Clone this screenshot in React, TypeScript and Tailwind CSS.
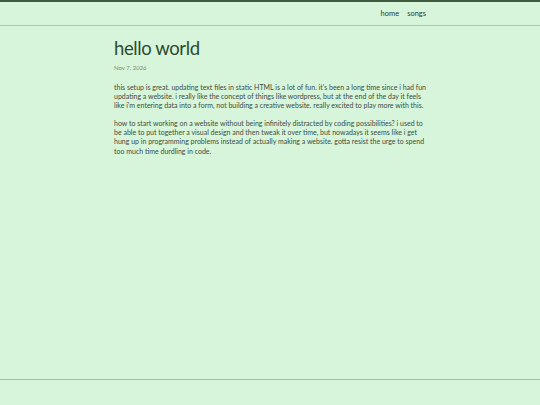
export default function App() {
  return (
    <div
      className="flex min-h-[405px] flex-col bg-[#d7f5db] text-[#3a4a3a]"
      style={{ fontFamily: "Lato, 'Liberation Sans', sans-serif" }}
    >
      <header className="border-t-2 border-b border-t-[#3d5a3e] border-b-[#a9c6aa]">
        <nav className="mx-auto flex h-[23px] w-[312px] items-center justify-end gap-[8px] pt-[1px] text-[7.5px] text-[#2e3a2e]">
          <a href="#">home</a>
          <a href="#">songs</a>
        </nav>
      </header>

      <main className="mx-auto w-[312px] flex-1 pt-[11px]">
        <h1 className="text-[18.5px] leading-[22px] tracking-[-0.4px] text-[#2f4a31]">hello world</h1>
        <p className="mt-[3.5px] text-[6px] leading-[9px] text-[#7a8a7a]">Nov 7, 2026</p>

        <div className="mt-[11.5px] space-y-[8.3px] text-[7px] leading-[9.2px] text-[#3d4c3d]">
          <p>
            this setup is great. updating text files in static HTML is a lot of fun. it's been a long time since i had
            fun updating a website. i really like the concept of things like wordpress, but at the end of the day it
            feels like i'm entering data into a form, not building a creative website. really excited to play more
            with this.
          </p>
          <p>
            how to start working on a website without being infinitely distracted by coding possibilities? i used to
            be able to put together a visual design and then tweak it over time, but nowadays it seems like i get
            hung up in programming problems instead of actually making a website. gotta resist the urge to spend
            too much time durdling in code.
          </p>
        </div>
      </main>

      <footer className="h-[26px] border-t border-[#9fbf9f]" />
    </div>
  );
}
